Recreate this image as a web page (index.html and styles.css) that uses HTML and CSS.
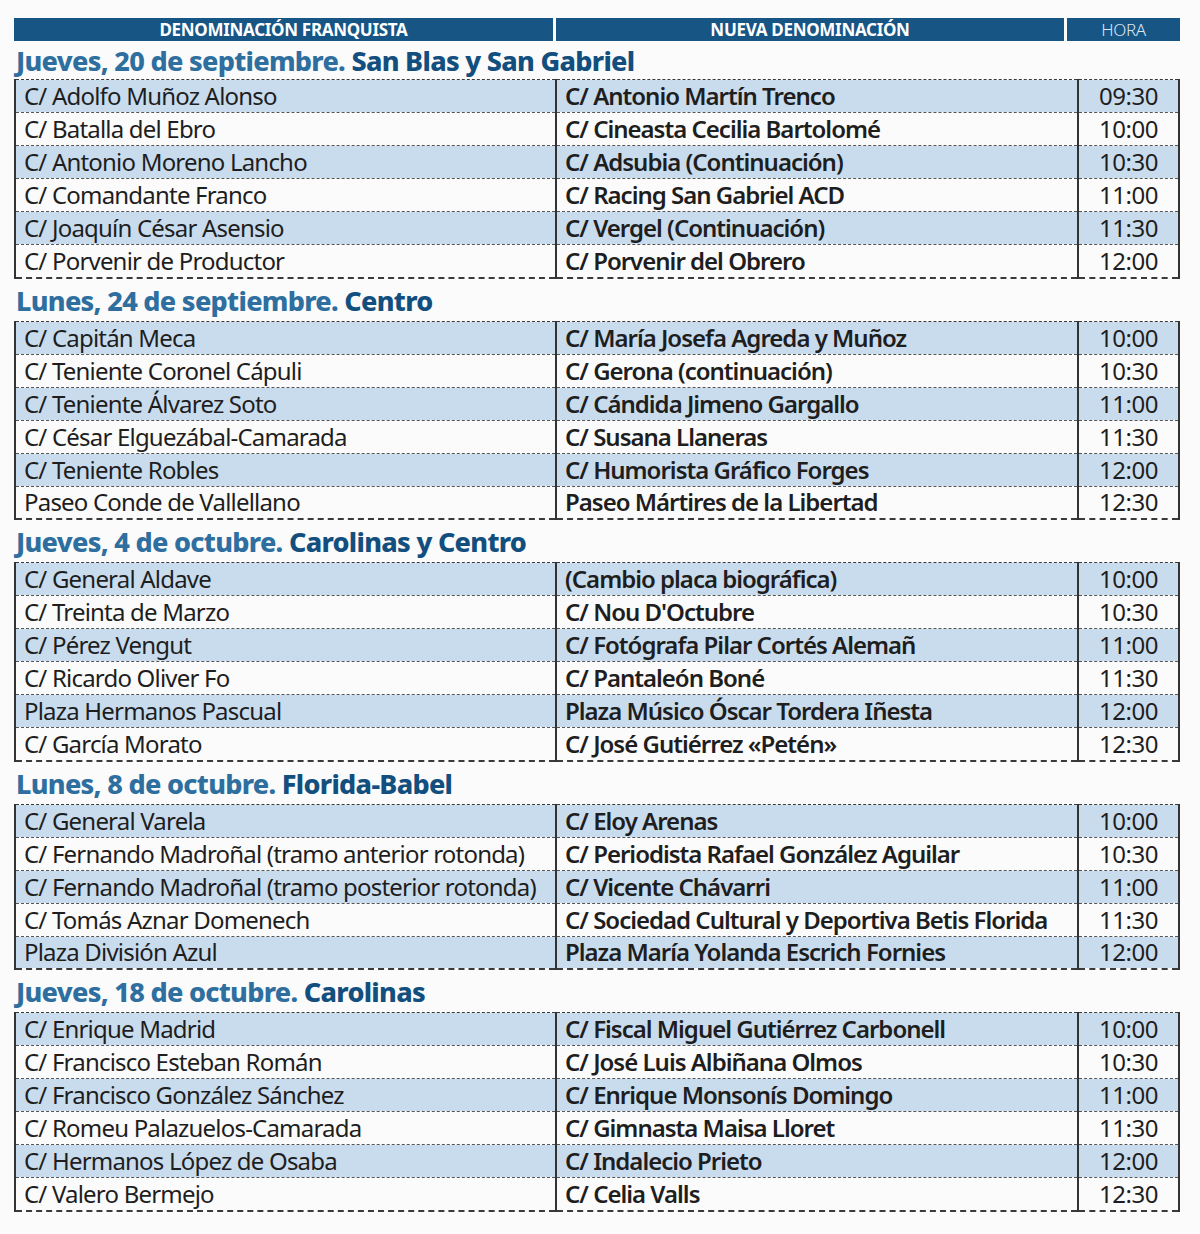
FILE: index.html
```html
<!DOCTYPE html>
<html lang="es">
<head>
    <meta charset="UTF-8">
    <meta name="viewport" content="width=device-width, initial-scale=1.0">
    <title>Cambio de calles</title>
    <link rel="stylesheet" href="styles.css">
</head>
<body>
    <main class="sheet">
        <div class="head-bar">
            <span class="h-old">DENOMINACIÓN FRANQUISTA</span>
            <span class="h-new">NUEVA DENOMINACIÓN</span>
            <span class="h-hour">HORA</span>
        </div>

        <section class="day">
            <h2 class="day-title"><span class="date">Jueves, 20 de septiembre.</span> <span class="zone">San Blas y San Gabriel</span></h2>
            <table class="streets">
                <tr><td class="old">C/ Adolfo Muñoz Alonso</td><td class="new">C/ Antonio Martín Trenco</td><td class="hour">09:30</td></tr>
                <tr><td class="old">C/ Batalla del Ebro</td><td class="new">C/ Cineasta Cecilia Bartolomé</td><td class="hour">10:00</td></tr>
                <tr><td class="old">C/ Antonio Moreno Lancho</td><td class="new">C/ Adsubia (Continuación)</td><td class="hour">10:30</td></tr>
                <tr><td class="old">C/ Comandante Franco</td><td class="new">C/ Racing San Gabriel ACD</td><td class="hour">11:00</td></tr>
                <tr><td class="old">C/ Joaquín César Asensio</td><td class="new">C/ Vergel (Continuación)</td><td class="hour">11:30</td></tr>
                <tr><td class="old">C/ Porvenir de Productor</td><td class="new">C/ Porvenir del Obrero</td><td class="hour">12:00</td></tr>
            </table>
        </section>

        <section class="day">
            <h2 class="day-title"><span class="date">Lunes, 24 de septiembre.</span> <span class="zone">Centro</span></h2>
            <table class="streets">
                <tr><td class="old">C/ Capitán Meca</td><td class="new">C/ María Josefa Agreda y Muñoz</td><td class="hour">10:00</td></tr>
                <tr><td class="old">C/ Teniente Coronel Cápuli</td><td class="new">C/ Gerona (continuación)</td><td class="hour">10:30</td></tr>
                <tr><td class="old">C/ Teniente Álvarez Soto</td><td class="new">C/ Cándida Jimeno Gargallo</td><td class="hour">11:00</td></tr>
                <tr><td class="old">C/ César Elguezábal-Camarada</td><td class="new">C/ Susana Llaneras</td><td class="hour">11:30</td></tr>
                <tr><td class="old">C/ Teniente Robles</td><td class="new">C/ Humorista Gráfico Forges</td><td class="hour">12:00</td></tr>
                <tr><td class="old">Paseo Conde de Vallellano</td><td class="new">Paseo Mártires de la Libertad</td><td class="hour">12:30</td></tr>
            </table>
        </section>

        <section class="day">
            <h2 class="day-title"><span class="date">Jueves, 4 de octubre.</span> <span class="zone">Carolinas y Centro</span></h2>
            <table class="streets">
                <tr><td class="old">C/ General Aldave</td><td class="new">(Cambio placa biográfica)</td><td class="hour">10:00</td></tr>
                <tr><td class="old">C/ Treinta de Marzo</td><td class="new">C/ Nou D'Octubre</td><td class="hour">10:30</td></tr>
                <tr><td class="old">C/ Pérez Vengut</td><td class="new">C/ Fotógrafa Pilar Cortés Alemañ</td><td class="hour">11:00</td></tr>
                <tr><td class="old">C/ Ricardo Oliver Fo</td><td class="new">C/ Pantaleón Boné</td><td class="hour">11:30</td></tr>
                <tr><td class="old">Plaza Hermanos Pascual</td><td class="new">Plaza Músico Óscar Tordera Iñesta</td><td class="hour">12:00</td></tr>
                <tr><td class="old">C/ García Morato</td><td class="new">C/ José Gutiérrez «Petén»</td><td class="hour">12:30</td></tr>
            </table>
        </section>

        <section class="day">
            <h2 class="day-title"><span class="date">Lunes, 8 de octubre.</span> <span class="zone">Florida-Babel</span></h2>
            <table class="streets">
                <tr><td class="old">C/ General Varela</td><td class="new">C/ Eloy Arenas</td><td class="hour">10:00</td></tr>
                <tr><td class="old">C/ Fernando Madroñal (tramo anterior rotonda)</td><td class="new">C/ Periodista Rafael González Aguilar</td><td class="hour">10:30</td></tr>
                <tr><td class="old">C/ Fernando Madroñal (tramo posterior rotonda)</td><td class="new">C/ Vicente Chávarri</td><td class="hour">11:00</td></tr>
                <tr><td class="old">C/ Tomás Aznar Domenech</td><td class="new">C/ Sociedad Cultural y Deportiva Betis Florida</td><td class="hour">11:30</td></tr>
                <tr><td class="old">Plaza División Azul</td><td class="new">Plaza María Yolanda Escrich Fornies</td><td class="hour">12:00</td></tr>
            </table>
        </section>

        <section class="day">
            <h2 class="day-title"><span class="date">Jueves, 18 de octubre.</span> <span class="zone">Carolinas</span></h2>
            <table class="streets">
                <tr><td class="old">C/ Enrique Madrid</td><td class="new">C/ Fiscal Miguel Gutiérrez Carbonell</td><td class="hour">10:00</td></tr>
                <tr><td class="old">C/ Francisco Esteban Román</td><td class="new">C/ José Luis Albiñana Olmos</td><td class="hour">10:30</td></tr>
                <tr><td class="old">C/ Francisco González Sánchez</td><td class="new">C/ Enrique Monsonís Domingo</td><td class="hour">11:00</td></tr>
                <tr><td class="old">C/ Romeu Palazuelos-Camarada</td><td class="new">C/ Gimnasta Maisa Lloret</td><td class="hour">11:30</td></tr>
                <tr><td class="old">C/ Hermanos López de Osaba</td><td class="new">C/ Indalecio Prieto</td><td class="hour">12:00</td></tr>
                <tr><td class="old">C/ Valero Bermejo</td><td class="new">C/ Celia Valls</td><td class="hour">12:30</td></tr>
            </table>
        </section>
    </main>
</body>
</html>
```

FILE: styles.css
```css
* {
    margin: 0;
    padding: 0;
    box-sizing: border-box;
}

body {
    background-color: #fbfbfb;
    font-family: "Noto Sans", "Open Sans", sans-serif;
    color: #1e1e1e;
}

.sheet {
    width: 1166px;
    margin: 18px 0 0 14px;
}

/* top bar with column titles */
.head-bar {
    display: grid;
    grid-template-columns: 539px 508px 1fr;
    gap: 3px;
    height: 23px;
}

.head-bar span {
    background-color: #175585;
    color: #fff;
    font-size: 17px;
    line-height: 23px;
    text-align: center;
    font-weight: bold;
    letter-spacing: -0.3px;
}

.head-bar .h-hour {
    font-weight: 300;
    color: #dbe6f0;
}

.day-title {
    font-size: 27px;
    line-height: 34px;
    padding: 3px 0 0 2px;
    height: 38px;
    letter-spacing: -0.7px;
    white-space: nowrap;
    font-weight: 800;
}

.day-title .date {
    color: #2e6f9f;
}

.day-title .zone {
    color: #134f7e;
}

.day + .day .day-title {
    height: 42px;
    padding-top: 5px;
}

.streets {
    width: 1166px;
    border-collapse: collapse;
    table-layout: fixed;
    border-top: 1px dashed #3a3a3a;
    border-bottom: 2px dashed #3a3a3a;
}

.streets tr {
    height: 33px;
}

.streets tr:nth-child(odd) {
    background-color: #c9dcee;
}

.streets td {
    font-size: 24px;
    line-height: 30px;
    padding: 0 0 0 8px;
    border-bottom: 1px dashed #555;
    white-space: nowrap;
    overflow: hidden;
}

.streets td.old {
    width: 541px;
    font-weight: 400;
    letter-spacing: -0.8px;
    border-left: 2px solid #333;
    border-right: 2px solid #333;
}

.streets td.new {
    width: 522px;
    font-weight: 600;
    letter-spacing: -1px;
    border-right: 2px solid #333;
}

.streets td.hour {
    text-align: center;
    font-weight: 400;
    letter-spacing: -0.5px;
    padding: 0;
    border-right: 2px solid #333;
}
```
